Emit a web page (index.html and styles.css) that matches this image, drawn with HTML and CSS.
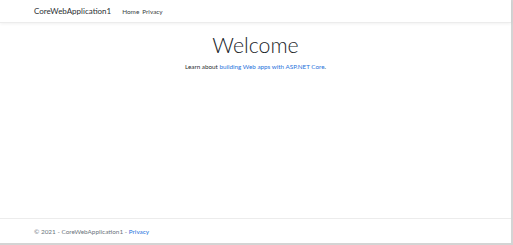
FILE: index.html
```html
<!DOCTYPE html>
<html>
<head>
<meta charset="utf-8">
<link rel="stylesheet" href="styles.css">
</head>
<body>
<div class="frame">
  <header class="navbar">
    <div class="container nav-inner">
      <a class="brand">CoreWebApplication1</a>
      <nav class="nav-links">
        <a class="nav-link">Home</a>
        <a class="nav-link">Privacy</a>
      </nav>
    </div>
  </header>
  <main class="main">
    <div class="hero">
      <h1 class="display">Welcome</h1>
      <p class="lead-text">Learn about <a class="link">building Web apps with ASP.NET Core</a>.</p>
    </div>
  </main>
  <footer class="footer">
    <div class="container">&copy; 2021 - CoreWebApplication1 - <a class="link">Privacy</a></div>
  </footer>
</div>
</body>
</html>
```
FILE: styles.css
```css
html, body {
  margin: 0;
  padding: 0;
  background: #ffffff;
}
body {
  font-family: "Segoe UI", Lato, "Noto Sans", sans-serif;
  color: #212529;
}
.frame {
  width: 511px;
  height: 243px;
  border-right: 2px solid #d4d4d4;
  border-bottom: 2px solid #d4d4d4;
  display: flex;
  flex-direction: column;
  background: #fff;
}
.container {
  padding-left: 34px;
  padding-right: 34px;
}
.navbar {
  height: 22px;
  border-bottom: 1px solid #ececec;
  box-shadow: 0 1px 3px rgba(0,0,0,0.06);
  display: flex;
  align-items: center;
  flex-shrink: 0;
}
.nav-inner {
  display: flex;
  align-items: center;
}
.brand {
  font-size: 8px;
  color: #2b2f33;
  margin-right: 11px;
}
.nav-links {
  display: flex;
  gap: 3px;
}
.nav-link {
  font-size: 6.4px;
  color: #3a3f44;
}
.main {
  flex: 1;
}
.hero {
  text-align: center;
  padding-top: 10px;
}
.display {
  margin: 0;
  font-size: 21.3px;
  font-weight: 300;
  line-height: 1.2;
  color: #212529;
}
.lead-text {
  margin: 4px 0 0;
  font-size: 6.3px;
  color: #2b2f33;
}
.link {
  color: #2a74dc;
}
.footer {
  height: 24px;
  border-top: 1px solid #ececec;
  display: flex;
  align-items: center;
  font-size: 6.4px;
  color: #6c757d;
  flex-shrink: 0;
}
```
